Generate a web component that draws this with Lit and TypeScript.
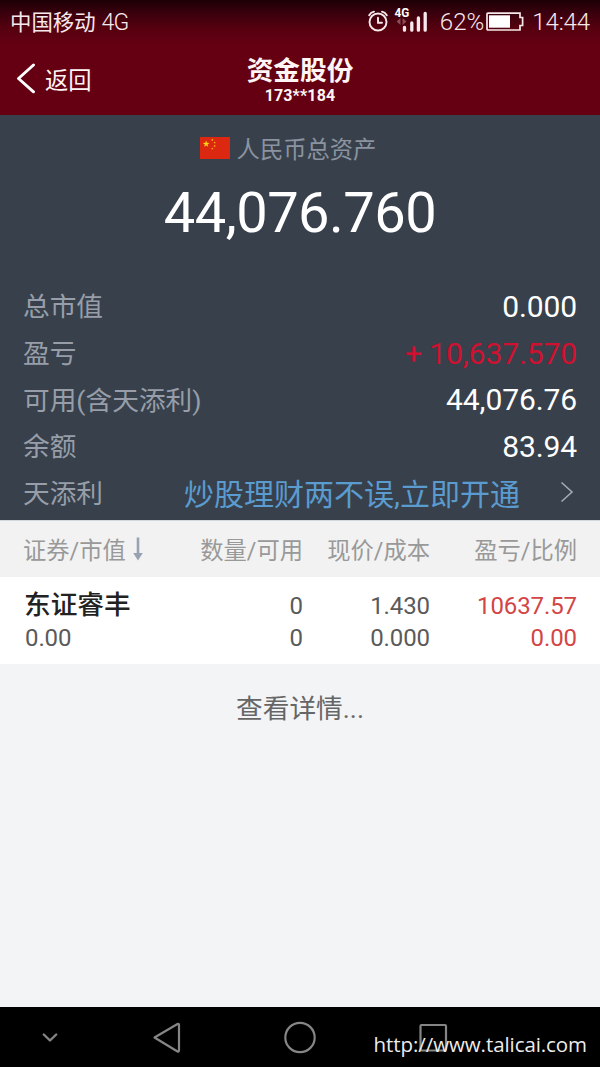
import { LitElement, html, css, svg } from "lit";
import { customElement } from "lit/decorators.js";
import { classMap } from "lit/directives/class-map.js";

const star = (cx: number, cy: number, r: number) => {
  const pts: string[] = [];
  for (let i = 0; i < 10; i++) {
    const a = (Math.PI / 5) * i - Math.PI / 2;
    const k = i % 2 ? r * 0.4 : r;
    pts.push(`${(cx + k * Math.cos(a)).toFixed(2)},${(cy + k * Math.sin(a)).toFixed(2)}`);
  }
  return svg`<polygon points=${pts.join(" ")} fill="#fbd116"></polygon>`;
};

const base = css`
  :host {
    display: block;
    box-sizing: border-box;
    font-family: Roboto, "Noto Sans CJK SC", sans-serif;
    white-space: nowrap;
  }
  svg {
    display: block;
    flex: none;
  }
`;

@customElement("status-bar")
class StatusBar extends LitElement {
  static styles = [
    base,
    css`
      .bar {
        display: flex;
        align-items: center;
        height: 43px;
        padding: 0 10px 0 10px;
        color: #f6e9eb;
      }
      .carrier {
        font-size: 21.4px;
        line-height: 43px;
        padding-top: 2px;
      }
      .net {
        font-size: 23px;
        font-weight: 300;
        line-height: 43px;
        margin-left: 6px;
        padding-top: 2px;
        letter-spacing: -0.8px;
      }
      .icons {
        margin-left: auto;
      }
      .num {
        font-size: 24px;
        font-weight: 300;
        line-height: 43px;
        padding-top: 1px;
      }
      .pct {
        margin-left: 12px;
      }
      .battery {
        margin-left: 2px;
      }
      .time {
        margin-left: 8px;
        letter-spacing: -0.1px;
      }
      .sup {
        font: 700 12.4px Roboto, sans-serif;
      }
    `,
  ];
  render() {
    return html`<div class="bar">
      <span class="carrier">中国移动</span><span class="net">4G</span>
      <svg class="icons" width="60" height="34" viewBox="367 4 60 34">
        <g fill="none" stroke="#f6e9eb" stroke-width="1.9" stroke-linecap="round">
          <circle cx="377" cy="21" r="8.5"></circle>
          <path d="M377 16.8V21.8H381M368.2 14.2Q370 11.2 373 10.6M381 10.6Q384 11.2 385.8 14.2"></path>
        </g>
        <text class="sup" x="393.4" y="15.8" fill="#fff" textLength="14.8" lengthAdjust="spacingAndGlyphs">4G</text>
        <path d="M395.5 20.5L399.5 17V24ZM405.5 20.5L401.5 17V24Z" fill="#8e4a57"></path>
        <path d="M403.5 26.3V29.2M410.8 21.8V29.2M417.4 17V29.2M424.2 12.3V29.2"
          stroke="#f6e9eb" stroke-width="3.3" stroke-linecap="round"></path>
      </svg>
      <span class="num pct">62%</span>
      <svg class="battery" width="38" height="20" viewBox="0 0 38 20">
        <path d="M2 1.2H34V5.5H36.6V13.5H34V18H2Q1 18 1 17V2.2Q1 1.2 2 1.2Z" fill="none" stroke="#f6e9eb" stroke-width="1.7"></path>
        <rect x="3" y="3.3" width="21" height="12.4" fill="#fff"></rect>
      </svg>
      <span class="num time">14:44</span>
    </div>`;
  }
}

@customElement("title-bar")
class TitleBar extends LitElement {
  static styles = [
    base,
    css`
      .bar {
        display: grid;
        grid-template-columns: 1fr auto 1fr;
        height: 72px;
        padding: 0 16px;
        color: #fff5f5;
      }
      .back {
        display: flex;
        align-items: center;
        gap: 9px;
        font-size: 23.3px;
        line-height: 30px;
        height: 72px;
      }
      .back span {
        padding-top: 3px;
      }
      .mid {
        text-align: center;
        padding-top: 12px;
      }
      .title {
        font-size: 26.7px;
        font-weight: 700;
        line-height: 32px;
      }
      .sub {
        font-size: 16px;
        font-weight: 700;
        line-height: 18px;
        letter-spacing: 0.1px;
      }
    `,
  ];
  render() {
    return html`<div class="bar">
      <div class="back">
        <svg width="20" height="32" viewBox="0 0 20 32">
          <path d="M17.5 2L2.5 15.5L17.5 28.8" fill="none" stroke="#fff" stroke-width="2.9" stroke-linecap="round" stroke-linejoin="round"></path>
        </svg>
        <span>返回</span>
      </div>
      <div class="mid">
        <div class="title">资金股份</div>
        <div class="sub">173**184</div>
      </div>
    </div>`;
  }
}

@customElement("asset-summary")
class AssetSummary extends LitElement {
  static styles = [
    base,
    css`
      :host {
        background: #38414b;
        height: 405px;
      }
      .head {
        display: flex;
        justify-content: center;
        align-items: center;
        gap: 7px;
        height: 32px;
        padding: 17px 48px 0 24px;
        color: #8b93a0;
        font-size: 23.3px;
      }
      .total {
        height: 98px;
        margin-bottom: 21px;
        line-height: 99px;
        text-align: center;
        color: #fff;
        font-size: 56px;
        letter-spacing: -0.5px;
      }
      .row {
        display: flex;
        align-items: center;
        justify-content: space-between;
        height: 46.7px;
        padding: 0 23px;
      }
      .label {
        color: #979ea9;
        font-size: 26.7px;
        padding-bottom: 3px;
      }
      .value {
        color: #fff;
        font-size: 30px;
        letter-spacing: -0.1px;
      }
      .gain {
        color: #d01030;
      }
      .promo {
        display: flex;
        align-items: center;
        color: #5a9bd0;
        font-size: 30px;
      }
      .promo span {
        padding-bottom: 3px;
      }
      .chevron {
        margin-left: 40px;
        margin-right: 3px;
        margin-top: -2px;
      }
    `,
  ];
  rows = [
    ["总市值", "0.000"],
    ["盈亏", "+ 10,637.570"],
    ["可用(含天添利)", "44,076.76"],
    ["余额", "83.94"],
  ];
  render() {
    return html`
      <div class="head">
        <svg width="30" height="22" viewBox="0 0 30 22">
          <rect width="30" height="22" fill="#dc2810"></rect>
          ${star(6.2, 7, 3.5)}${star(12.3, 3, 1.2)}${star(14.7, 5.6, 1.2)}${star(14.7, 9, 1.2)}${star(12.3, 11.6, 1.2)}
        </svg>
        <span>人民币总资产</span>
      </div>
      <div class="total">44,076.760</div>
      ${this.rows.map(
        ([label, value]) => html`<div class="row">
          <span class="label">${label}</span>
          <span class=${classMap({ value: true, gain: value.startsWith("+") })}>${value}</span>
        </div>`
      )}
      <div class="row">
        <span class="label">天添利</span>
        <span class="promo">
          <span>炒股理财两不误,立即开通</span>
          <svg class="chevron" width="14" height="22" viewBox="0 0 14 22">
            <path d="M1.5 1.5L12 11L1.5 20.5" fill="none" stroke="#a3a9b2" stroke-width="1.6"></path>
          </svg>
        </span>
      </div>
    `;
  }
}

@customElement("holdings-table")
class HoldingsTable extends LitElement {
  static styles = [
    base,
    css`
      .cols {
        display: grid;
        grid-template-columns: 140px 139px 127px 147px;
        padding: 0 23px 0 24px;
        text-align: right;
      }
      .header {
        height: 57px;
        line-height: 61px;
        box-sizing: border-box;
        border-top: 1px solid #d3d8dd;
        background: #f2f2f2;
        color: #999;
        font-size: 23.3px;
      }
      .first {
        display: flex;
        align-items: center;
        gap: 7px;
        margin-left: -1px;
        text-align: left;
      }
      .arrow {
        margin-top: -6px;
      }
      .item {
        height: 87px;
        box-sizing: border-box;
        padding-top: 12px;
        grid-template-rows: 33px 32px;
        background: #fff;
        color: #5a5a5a;
        font-size: 24px;
        line-height: 32px;
        letter-spacing: -0.1px;
      }
      .name {
        text-align: left;
        color: #222;
        font-size: 26.7px;
        font-weight: 500;
        line-height: 32px;
        letter-spacing: 0;
      }
      .left {
        text-align: left;
        padding-left: 1px;
      }
      .price {
        line-height: 34px;
      }
      .red {
        color: #d34545;
      }
      .more {
        text-align: center;
        color: #666;
        font-size: 26.7px;
        line-height: 40px;
        padding-top: 25px;
      }
    `,
  ];
  render() {
    return html`
      <div class="cols header">
        <span class="first">
          <span>证券/市值</span>
          <svg class="arrow" width="10" height="24" viewBox="0 0 10 24">
            <path d="M3.7 0.5H6.3V16H9.8L5 23.5L0.2 16H3.7Z" fill="#98a2b2"></path>
          </svg>
        </span>
        <span>数量/可用</span><span>现价/成本</span><span>盈亏/比例</span>
      </div>
      <div class="cols item">
        <span class="name">东证睿丰</span>
        <span class="price">0</span><span class="price">1.430</span><span class="price red">10637.57</span>
        <span class="left">0.00</span>
        <span>0</span><span>0.000</span><span class="red">0.00</span>
      </div>
      <div class="more">查看详情...</div>
    `;
  }
}

@customElement("nav-bar")
class NavBar extends LitElement {
  static styles = [
    base,
    css`
      :host {
        position: relative;
        height: 60px;
        background: #000;
      }
      .mark {
        position: absolute;
        right: 13px;
        bottom: 8px;
        color: #ececec;
        font-family: "Open Sans", "Noto Sans", sans-serif;
        font-size: 20.5px;
        line-height: 30px;
        letter-spacing: -0.08px;
      }
    `,
  ];
  render() {
    return html`
      <svg width="600" height="60" viewBox="0 0 600 60">
        <g fill="none" stroke="#858585" stroke-width="2.2" stroke-linejoin="round" stroke-linecap="round">
          <path d="M43.8 27.5L50 33.5L56.2 27.5" stroke-width="2.4"></path>
          <path d="M154.5 30.5L177.5 17Q179 16.5 179 18V43Q179 45 177.5 44.5Z"></path>
          <circle cx="300" cy="30.5" r="14.7"></circle>
          <rect x="420.5" y="18" width="25.5" height="25.5" rx="1"></rect>
        </g>
      </svg>
      <span class="mark">http://www.talicai.com</span>
    `;
  }
}

@customElement("app-root")
class AppRoot extends LitElement {
  static styles = css`
    :host {
      display: flex;
      flex-direction: column;
      height: 1067px;
      overflow: hidden;
      background: #f3f4f6;
    }
    .top {
      background: linear-gradient(#1c0006 0, #3c000d 14px, #58000f 30px, #640012 44px);
    }
    .body {
      flex: 1;
    }
  `;
  render() {
    return html`
      <div class="top"><status-bar></status-bar><title-bar></title-bar></div>
      <asset-summary></asset-summary>
      <holdings-table class="body"></holdings-table>
      <nav-bar></nav-bar>
    `;
  }
}
